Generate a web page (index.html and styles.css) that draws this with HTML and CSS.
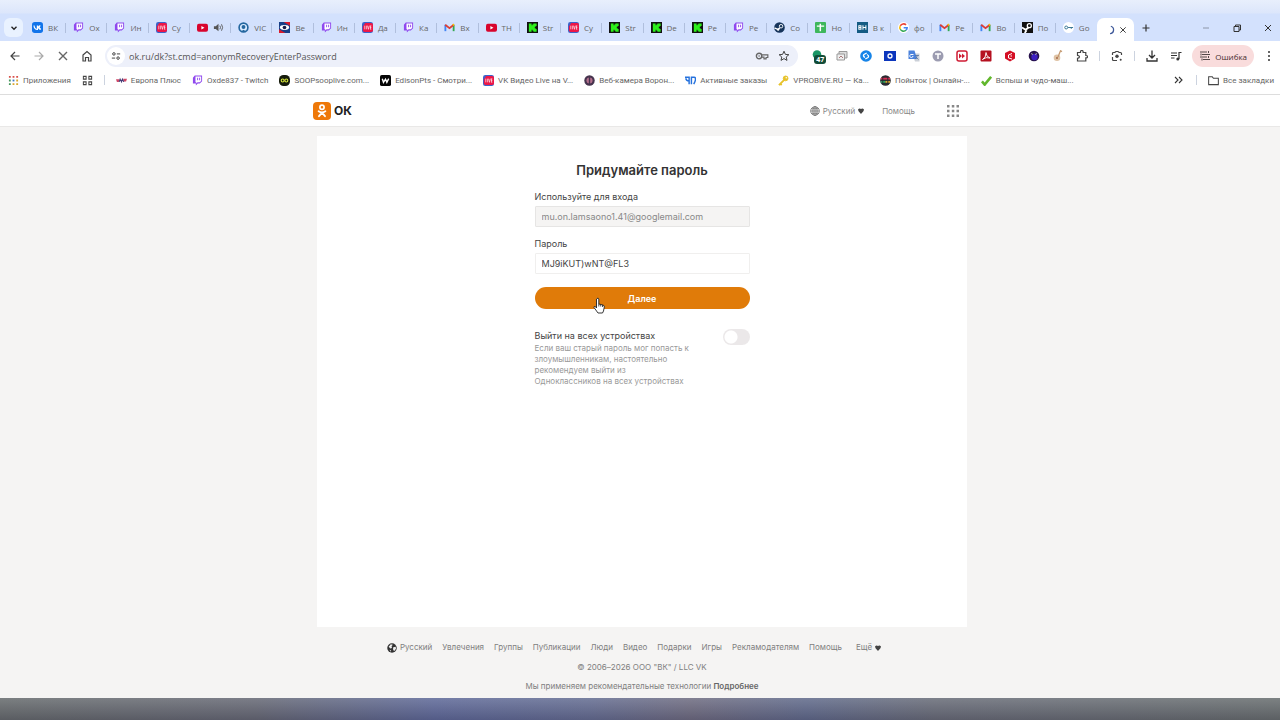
FILE: index.html
```
<!DOCTYPE html>
<html lang="ru">
<head>
    <meta charset="UTF-8">
    <meta name="viewport" content="width=device-width, initial-scale=1.0">
    <title>Придумайте пароль</title>
    <link rel="stylesheet" href="styles.css">
</head>
<body>
    <!-- shared icons -->
    <svg class="sprite" aria-hidden="true">
        <symbol id="vk" viewBox="0 0 12 12"><rect width="12" height="12" rx="3" fill="#1274ea"/><path d="M2.2 3.8c.2 2.6 1.5 4.2 3.7 4.3V3.8M5.9 5.9c1.5-.2 2-1 2.4-2.1M5.9 5.9c1.6 0 2.2 1 2.6 2.3M9 3.800L7.500 5.900 9.600 8.200" fill="none" stroke="#fff" stroke-width="1.300"/></symbol>
        <symbol id="twitch" viewBox="0 0 12 12"><path d="M3 .5h8v6.300L8.500 9.300H6.300L4.200 11.500V9.300H1V3z" fill="#8f48ee"/><path d="M3.800 1.500H10v5L8.300 8H6L4.700 9.200V8H3.800z" fill="#fff"/><path d="M6.100 3v2.700M8.300 3v2.700" stroke="#8f48ee" stroke-width="1"/></symbol>
        <symbol id="live" viewBox="0 0 12 12"><rect width="12" height="12" rx="2.500" fill="#3d62c9"/><path d="M3.500 1H10a2 2 0 0 1 2 2v6a2 2 0 0 1-2 2H3a2 2 0 0 1-2-2V5z" fill="#ec1747"/><path d="M3 4v4M4.800 4v4M6 4l1 4 1-4M9.200 4v4M9 4.300h1.200M9 6h1.200M9 7.800h1.200" fill="none" stroke="#fff" stroke-width=".7"/></symbol>
        <symbol id="youtube" viewBox="0 0 12 12"><rect y="2" width="12" height="8.500" rx="2" fill="#d8042d"/><path d="M4.800 4.300v4l3.300-2z" fill="#fff"/></symbol>
        <symbol id="kick" viewBox="0 0 12 12"><rect width="12" height="12" fill="#111"/><path d="M2 1.500h3v2h1v-1h1v-1h3.500v2.800h-1v1h-1v1.400h1v1h1v2.800H7v-1H6v-1H5v2H2z" fill="#2df01b"/></symbol>
        <symbol id="gmail" viewBox="0 0 12 12"><path d="M1.500 10V3" stroke="#4285f4" stroke-width="2"/><path d="M10.500 10V3" stroke="#34a853" stroke-width="2"/><path d="M1.300 3L6 6.700 10.700 3" fill="none" stroke="#dc3d35" stroke-width="2"/><path d="M9.600 3.500l1.300-1" stroke="#fbbc04" stroke-width="2"/></symbol>
        <symbol id="steam" viewBox="0 0 12 12"><circle cx="6" cy="6" r="5.800" fill="#17355c"/><circle cx="7.700" cy="4.600" r="1.900" fill="none" stroke="#fff" stroke-width="1"/><path d="M.5 6.500l4 1.700 1.800-2" fill="none" stroke="#fff" stroke-width="1.500"/><circle cx="4.500" cy="8.300" r="1.300" fill="#fff"/></symbol>
        <symbol id="steam-sq" viewBox="0 0 12 12"><path d="M0 0h12v12H0z" fill="#111"/><circle cx="8" cy="4" r="2.200" fill="none" stroke="#fff" stroke-width="1.400"/><path d="M0 6l4 2.500L7 6M3 12l2-3" fill="none" stroke="#fff" stroke-width="2"/></symbol>
        <symbol id="camera" viewBox="0 0 12 12"><circle cx="6" cy="6" r="4.800" fill="#dcecff" stroke="#24679f" stroke-width="1.800"/><circle cx="6" cy="5.500" r="2.100" fill="#24679f"/><path d="M3 10.500l3-2 3 2" fill="#24679f"/></symbol>
        <symbol id="flag" viewBox="0 0 12 12"><path d="M0 0h12v12H0z" fill="#183f88"/><path d="M5 0h7v4zM0 12V8l7 4z" fill="#da1b2c"/><ellipse cx="6" cy="6" rx="5" ry="2.600" fill="#fff"/><circle cx="6" cy="6" r="2" fill="#171b4b"/></symbol>
        <symbol id="sheet" viewBox="0 0 12 12"><rect width="12" height="12" rx="1" fill="#3eb75c"/><path d="M2 4.500h8M5.800 2v8" stroke="#fff" stroke-width="1.600"/></symbol>
        <symbol id="bh" viewBox="0 0 12 12"><path d="M0 0h12v12H0z" fill="#145b83"/><path d="M2 4v4h2.300V4zM2 6h2.300M6.500 3.500v5M9.700 3.500v5M6.500 6h3" fill="none" stroke="#fff" stroke-width="1.100"/></symbol>
        <symbol id="google" viewBox="0 0 12 12"><circle cx="6" cy="6" r="6" fill="#fff"/><path d="M8.800 3.200A4 4 0 0 0 2.500 4.200" fill="none" stroke="#ea4335" stroke-width="1.700"/><path d="M2.500 4.200a4 4 0 0 0 0 3.700" fill="none" stroke="#fbbc05" stroke-width="1.700"/><path d="M2.500 7.900A4 4 0 0 0 8.700 9" fill="none" stroke="#34a853" stroke-width="1.700"/><path d="M8.700 9a4 4 0 0 0 1.300-2.800H6.200" fill="none" stroke="#4285f4" stroke-width="1.700"/></symbol>
        <symbol id="key" viewBox="0 0 12 12"><circle cx="3.500" cy="6" r="2.300" fill="none" stroke="currentColor" stroke-width="1.200"/><circle cx="3.500" cy="6" r=".7" fill="currentColor"/><path d="M5.800 5H11v2.300H9.500V8.500H7.700V7H5.800" fill="none" stroke="currentColor"/></symbol>
        <symbol id="apps" viewBox="0 0 12 12"><g fill="currentColor"><path d="M0 0h2.500v2.500H0zM4.800 0h2.500v2.500H4.800zM9.500 0H12v2.500H9.500zM0 4.800h2.500v2.500H0zM4.800 4.800h2.500v2.500H4.800zM9.500 4.800H12v2.500H9.500zM0 9.500h2.500V12H0zM4.800 9.500h2.500V12H4.800zM9.500 9.500H12V12H9.500z"/></g></symbol>
        <symbol id="close" viewBox="0 0 12 12"><path d="M2 2l8 8M10 2l-8 8" fill="none" stroke="currentColor" stroke-width="1.400"/></symbol>
        <symbol id="arrow" viewBox="0 0 6 6"><path d="M0 1.500Q1.500 0 3 1q1.500-1 3 .5Q6 3 3 6 0 3 0 1.500z" fill="currentColor"/></symbol>
    </svg>

    <div class="browser">
        <div class="tab-bar">
            <button class="tab-search" aria-label="Поиск вкладок"><svg viewBox="0 0 12 12"><path d="M3 4.500l3 3 3-3" fill="none" stroke="#222" stroke-width="1.600"/></svg></button>
            <div class="tabs">
                <button class="tab"><svg><use href="#vk"/></svg><span>ВК</span></button>
                <button class="tab"><svg><use href="#twitch"/></svg><span>Ох</span></button>
                <button class="tab"><svg><use href="#twitch"/></svg><span>Ин</span></button>
                <button class="tab"><svg><use href="#live"/></svg><span>Су</span></button>
                <button class="tab"><svg><use href="#youtube"/></svg><svg viewBox="0 0 12 12" class="sound"><path d="M1 4.500h2L6 2v8L3 7.500H1z" fill="#555"/><path d="M7.500 4q1.300 2 0 4M9.300 2.500q2.300 3.500 0 7" fill="none" stroke="#555"/></svg></button>
                <button class="tab"><svg><use href="#camera"/></svg><span>VIC</span></button>
                <button class="tab"><svg><use href="#flag"/></svg><span>Ве</span></button>
                <button class="tab"><svg><use href="#twitch"/></svg><span>Ин</span></button>
                <button class="tab"><svg><use href="#live"/></svg><span>Да</span></button>
                <button class="tab"><svg><use href="#twitch"/></svg><span>Ка</span></button>
                <button class="tab"><svg><use href="#gmail"/></svg><span>Вх</span></button>
                <button class="tab"><svg><use href="#youtube"/></svg><span>ТН</span></button>
                <button class="tab"><svg><use href="#kick"/></svg><span>Str</span></button>
                <button class="tab"><svg><use href="#live"/></svg><span>Су</span></button>
                <button class="tab"><svg><use href="#kick"/></svg><span>Str</span></button>
                <button class="tab"><svg><use href="#kick"/></svg><span>De</span></button>
                <button class="tab"><svg><use href="#kick"/></svg><span>Ре</span></button>
                <button class="tab"><svg><use href="#twitch"/></svg><span>Ре</span></button>
                <button class="tab"><svg><use href="#steam"/></svg><span>Со</span></button>
                <button class="tab"><svg><use href="#sheet"/></svg><span>Но</span></button>
                <button class="tab"><svg><use href="#bh"/></svg><span>В к</span></button>
                <button class="tab"><svg><use href="#google"/></svg><span>фо</span></button>
                <button class="tab"><svg><use href="#gmail"/></svg><span>Ре</span></button>
                <button class="tab"><svg><use href="#gmail"/></svg><span>Во</span></button>
                <button class="tab"><svg><use href="#steam-sq"/></svg><span>По</span></button>
                <button class="tab"><svg viewBox="0 0 12 12"><circle cx="6" cy="6" r="6" fill="#fff"/><circle cx="3.500" cy="6" r="1.600" fill="none" stroke="#2d6e8d" stroke-width="1"/><path d="M5.500 6H11M9 6v1.500" stroke="#2d6e8d"/></svg><span>Go</span></button>
            </div>
            <div class="tab-active">
                <svg viewBox="0 0 12 12"><path d="M7 1.500A4.600 4.600 0 0 1 6 10.500" fill="none" stroke="#3e5899" stroke-width="1.500"/></svg>
                <button class="icon-btn tiny" aria-label="Закрыть вкладку"><svg><use href="#close"/></svg></button>
            </div>
            <button class="icon-btn new-tab" aria-label="Новая вкладка"><svg viewBox="0 0 12 12"><path d="M6 2.500v7M2.500 6h7" stroke="#333" stroke-width="1.200"/></svg></button>
            <div class="window-controls">
                <button class="icon-btn" aria-label="Свернуть"><svg viewBox="0 0 12 12"><path d="M3 6h6" stroke="#8d96a8"/></svg></button>
                <button class="icon-btn" aria-label="Развернуть"><svg viewBox="0 0 12 12"><path d="M3 4.500h5v5H3zM4.500 4.500V3h5v5H8" fill="none" stroke="#333"/></svg></button>
                <button class="icon-btn" aria-label="Закрыть"><svg viewBox="0 0 12 12"><path d="M3 3l6 6M9 3L3 9" stroke="#333"/></svg></button>
            </div>
        </div>

        <div class="toolbar">
            <div class="nav-buttons">
                <button class="icon-btn" aria-label="Назад"><svg viewBox="0 0 12 12"><path d="M10.500 6H2M6 2L2 6l4 4" fill="none" stroke="#444" stroke-width="1.200"/></svg></button>
                <button class="icon-btn" aria-label="Вперёд"><svg viewBox="0 0 12 12"><path d="M1.500 6H10M6 2l4 4-4 4" fill="none" stroke="#aaa" stroke-width="1.200"/></svg></button>
                <button class="icon-btn" aria-label="Остановить"><svg><use href="#close"/></svg></button>
                <button class="icon-btn" aria-label="Главная"><svg viewBox="0 0 12 12"><path d="M2 5l4-3.500L10 5v6H7.500V7.500h-3V11H2z" fill="none" stroke="#444" stroke-width="1.200"/></svg></button>
            </div>
            <div class="address">
                <button class="site-info" aria-label="Сведения о сайте"><svg viewBox="0 0 12 12"><path d="M7 3.500h4M1 8.500h4" stroke="#444" stroke-width="1.200"/><circle cx="3.500" cy="3.500" r="1.500" fill="none" stroke="#444" stroke-width="1.200"/><circle cx="8.500" cy="8.500" r="1.500" fill="none" stroke="#444" stroke-width="1.200"/></svg></button>
                <input type="text" class="url" aria-label="Адрес" value="ok.ru/dk?st.cmd=anonymRecoveryEnterPassword">
                <button class="icon-btn" aria-label="Пароли"><svg class="wide"><use href="#key"/></svg></button>
                <button class="icon-btn star" aria-label="В закладки"><svg viewBox="0 0 12 12"><path d="M6 1.200l1.400 3.200 3.500.3-2.700 2.300.8 3.400L6 8.600l-3 1.800.8-3.400L1.100 4.700l3.500-.3z" fill="none" stroke="#444"/></svg></button>
            </div>
            <div class="extensions">
                <button class="icon-btn badge-holder" aria-label="Расширение"><svg viewBox="0 0 12 12"><circle cx="5" cy="4.500" r="4.300" fill="#199565"/></svg><span class="badge">47</span></button>
                <button class="icon-btn" aria-label="Снимки"><svg viewBox="0 0 12 12"><path d="M3 1.500h8v6.500H3z" fill="#ddd" stroke="#999"/><path d="M1 4h7.500v6H1z" fill="#eee" stroke="#999"/><path d="M3 8l2-2 2 2" stroke="#a77" fill="none"/></svg></button>
                <button class="icon-btn" aria-label="Shazam"><svg viewBox="0 0 12 12"><circle cx="6" cy="6" r="5.800" fill="#1684e8"/><path d="M6.700 3L4 4.500q-1.500 1.500 1 3M5.300 9L8 7.500q1.500-1.500-1-3" fill="none" stroke="#fff" stroke-width="1.300"/></svg></button>
                <button class="icon-btn" aria-label="Запись"><svg viewBox="0 0 12 12"><path d="M0 1h12v10H0z" fill="#0c36bd"/><circle cx="6" cy="6" r="2" fill="none" stroke="#fff" stroke-width="1.300"/></svg></button>
                <button class="icon-btn" aria-label="Переводчик"><svg viewBox="0 0 12 12"><path d="M4 3.500h7.500v8H7z" fill="#cbd0d8"/><path d="M.5.500h6L9 9H.5z" fill="#4b82dc"/><path d="M5.500 4.500H2.700A1.600 1.600 0 1 0 5 6" fill="none" stroke="#fff"/><path d="M7 5.500h4M9 5v1q0 2-2 3M8 7l2.500 2.500" fill="none" stroke="#58739f" stroke-width=".8"/></svg></button>
                <button class="icon-btn" aria-label="T"><svg viewBox="0 0 12 12"><circle cx="6" cy="6" r="5.500" fill="#9c9cb1"/><path d="M3 4h6M6 4v5" stroke="#fff" stroke-width="1.500"/></svg></button>
                <button class="icon-btn" aria-label="Перемотка"><svg viewBox="0 0 12 12"><rect x="1" y="1" width="10" height="10" rx="2" fill="#fff" stroke="#cf1d35" stroke-width="1.500"/><path d="M3 3.500L6 6 3 8.500zM6 3.500L9 6 6 8.500z" fill="#cf1d35"/></svg></button>
                <button class="icon-btn" aria-label="PDF"><svg viewBox="0 0 12 12"><rect x=".5" y=".5" width="11" height="11" rx="1" fill="#b51120"/><path d="M2.500 9.500Q6 8 6 2.500q0 4 4 5.500Q6 6.500 2.500 9.500z" fill="none" stroke="#fff" stroke-width=".9"/></svg></button>
                <button class="icon-btn" aria-label="Блокировщик"><svg viewBox="0 0 12 12"><path d="M6 .5l5 2.500v5.500L6 11.500 1 8.500V3z" fill="#d50f25"/><path d="M8 3.500L4.500 5v3L8 9M8 6H6.500" fill="none" stroke="#fff"/></svg></button>
                <button class="icon-btn" aria-label="Расширение"><svg viewBox="0 0 12 12"><circle cx="6" cy="6" r="5.300" fill="#27124c"/><circle cx="6.500" cy="7" r="3.200" fill="#3d1fc0"/><path d="M3 3.500l2 1M7 4.500l2-1" stroke="#aaa"/></svg></button>
                <button class="icon-btn" aria-label="Музыка"><svg viewBox="0 0 12 12"><circle cx="5" cy="7.800" r="3.300" fill="#dfc3a5"/><path d="M6 7L8.500.800l1.500.800" fill="none" stroke="#c59a70" stroke-width="1.300"/><circle cx="5" cy="8" r="1" fill="#a66b4a"/></svg></button>
                <button class="icon-btn" aria-label="Расширения"><svg viewBox="0 0 12 12"><path d="M1.500 2.500h3V1.800a1.300 1.300 0 0 1 2.600 0v.7h2.700v3h.5a1.200 1.200 0 0 1 0 2.400h-.5V11H1.500V8.300q2-.2 2-1.500t-2-1.500z" fill="none" stroke="#444" stroke-width="1.200"/></svg></button>
            </div>
            <span class="divider"></span>
            <button class="icon-btn lens" aria-label="Объектив"><svg viewBox="0 0 12 12"><path d="M1.500 5V3.500q0-1 1-1h1.300L5 1.500h2l1.200 1h1.300q1 0 1 1V5M1.500 7v2.500q0 1 1 1H6" fill="none" stroke="#444" stroke-width="1.200"/><circle cx="6" cy="6.300" r="1.700" fill="#444"/><circle cx="9.700" cy="9.700" r="1" fill="#444"/></svg></button>
            <span class="divider"></span>
            <button class="icon-btn" aria-label="Загрузки"><svg viewBox="0 0 12 12"><path d="M6 .5v7M3 5l3 3 3-3M1 8v3h10V8" fill="none" stroke="#333" stroke-width="1.300"/></svg></button>
            <button class="icon-btn" aria-label="Медиа"><svg viewBox="0 0 12 12"><path d="M1 3h6M1 5.500h6M1 8h3.500M9 9V2.500h2.500" fill="none" stroke="#333" stroke-width="1.200"/><circle cx="7.800" cy="9" r="1.500" fill="#333"/></svg></button>
            <button class="error-btn"><svg viewBox="0 0 12 12"><path d="M1 2h7M3 4.500h8M1 7h7M4 9.500h7M9.500 1v2M2 3.500v2M9.500 6v2M3 8.500v2" stroke="#554848"/></svg>Ошибка</button>
            <button class="icon-btn menu" aria-label="Меню"><svg viewBox="0 0 12 12"><g fill="#333"><circle cx="6" cy="2" r="1"/><circle cx="6" cy="6" r="1"/><circle cx="6" cy="10" r="1"/></g></svg></button>
        </div>

        <div class="bookmarks">
            <a href="#" class="bookmark"><svg viewBox="0 0 12 12"><g fill="#d8504a"><path d="M1 1h2v2H1zM5 1h2v2H5zM9 1h2v2H9z"/></g><g fill="#47985c"><path d="M1 5h2v2H1zM1 9h2v2H1z"/></g><path d="M5 5h2v2H5z" fill="#3b78c9"/><path d="M9 5h2v2H9zM5 9h2v2H5zM9 9h2v2H9z" fill="#d7a62c"/></svg><span>Приложения</span></a>
            <a href="#" class="bookmark" aria-label="Группы вкладок"><svg viewBox="0 0 12 12"><path d="M1.500 1.500h3v3h-3zM7.500 1.500h3v3h-3zM1.500 7.500h3v3h-3zM7.500 7.500h3v3h-3z" fill="none" stroke="#444" stroke-width="1.100"/></svg></a>
            <span class="divider"></span>
            <a href="#" class="bookmark"><svg viewBox="0 0 12 12"><path d="M0 4.500h4l-1 3H1zM8 4h4l-1 3H8z" fill="#d04868"/><path d="M3.500 7.500l1-3 1.500 3 1-3 1.500 3" fill="none" stroke="#443c76" stroke-width="1.200"/></svg><span>Европа Плюс</span></a>
            <a href="#" class="bookmark"><svg><use href="#twitch"/></svg><span>Oxde837 - Twitch</span></a>
            <a href="#" class="bookmark"><svg viewBox="0 0 12 12"><rect width="12" height="12" rx="5" fill="#151b0b"/><circle cx="4" cy="6" r="1.600" fill="none" stroke="#d9e83c" stroke-width="1.200"/><circle cx="8" cy="6" r="1.600" fill="none" stroke="#d9e83c" stroke-width="1.200"/></svg><span>SOOPsooplive.com...</span></a>
            <a href="#" class="bookmark"><svg viewBox="0 0 12 12"><rect width="12" height="12" rx="2" fill="#050505"/><path d="M2.500 4l1.300 4L6 4.500 7.500 8l2-4" fill="none" stroke="#fff" stroke-width="1.500"/></svg><span>EdisonPts - Смотри...</span></a>
            <a href="#" class="bookmark"><svg><use href="#live"/></svg><span>VK Видео Live на V...</span></a>
            <a href="#" class="bookmark"><svg viewBox="0 0 12 12"><circle cx="6" cy="6" r="5.700" fill="#46344e"/><circle cx="6" cy="6" r="3.300" fill="#b5708e"/><path d="M6 2v8" stroke="#46344e" stroke-width="1.500"/></svg><span>Веб-камера Ворон...</span></a>
            <a href="#" class="bookmark"><svg viewBox="0 0 12 12"><path d="M0 2.500h4.500V10M1 3.500q0 3 3.500 3M7 10V2.500h3q1.500 0 1.500 2T9.500 10" fill="none" stroke="#2672dd" stroke-width="1.600"/></svg><span>Активные заказы</span></a>
            <a href="#" class="bookmark"><svg viewBox="0 0 12 12"><circle cx="8.300" cy="3.700" r="2.600" fill="#e7c229" stroke="#e7c229" stroke-width="1"/><circle cx="9" cy="3" r=".8" fill="#fff"/><path d="M6.500 5.500L1 11M2.500 9.500l1.500 1.500" stroke="#e7c229" stroke-width="2"/></svg><span>VPROBIVE.RU — Ка...</span></a>
            <a href="#" class="bookmark"><svg viewBox="0 0 12 12"><circle cx="6" cy="6" r="5.800" fill="#292b32"/><path d="M1 4h10" stroke="#d92f55" stroke-width="2"/><path d="M1 7.500h5" stroke="#2ea461" stroke-width="2"/><path d="M6 7.500h5" stroke="#d5a72c" stroke-width="2"/><path d="M3 1.500v9M8.500 1.500v9" stroke="#292b32"/></svg><span>Пойнток | Онлайн-...</span></a>
            <a href="#" class="bookmark"><svg viewBox="0 0 12 12"><path d="M1 7l3 3.500L11 2" fill="none" stroke="#61b72c" stroke-width="2.800"/></svg><span>Вспыш и чудо-маш...</span></a>
            <button class="icon-btn more" aria-label="Ещё закладки"><svg viewBox="0 0 12 12"><path d="M2 3l3 3-3 3M6 3l3 3-3 3" fill="none" stroke="#333" stroke-width="1.100"/></svg></button>
            <span class="divider"></span>
            <a href="#" class="bookmark all"><svg viewBox="0 0 12 12"><path d="M.7 2h4l1.200 1.500h5.400V10.500H.7z" fill="none" stroke="#444" stroke-width="1.100"/></svg><span>Все закладки</span></a>
        </div>
    </div>

    <header class="header">
        <div class="header-inner">
            <a href="#" class="logo">
                <svg viewBox="0 0 18 18"><rect width="18" height="18" rx="4" fill="#ee7808"/><circle cx="9" cy="5.300" r="2.100" fill="none" stroke="#fff" stroke-width="1.700"/><path d="M5.600 9.200Q9 11.400 12.400 9.200M9 10.700L6 14.200M9 10.700l3 3.500" fill="none" stroke="#fff" stroke-width="1.800" stroke-linecap="round"/></svg>
                <span>ОК</span>
            </a>
            <nav class="header-nav">
                <a href="#" class="lang"><svg viewBox="0 0 12 12"><path d="M1 6h10M1.700 3.300h8.600M1.700 8.700h8.600M6 .8v10.400" stroke="#666" stroke-width=".9"/><circle cx="6" cy="6" r="5.200" fill="none" stroke="#666" stroke-width=".9"/><ellipse cx="6" cy="6" rx="2.500" ry="5.200" fill="none" stroke="#666" stroke-width=".9"/></svg>Русский<svg class="arrow"><use href="#arrow"/></svg></a>
                <a href="#">Помощь</a>
                <button class="icon-btn services" aria-label="Сервисы"><svg><use href="#apps"/></svg></button>
            </nav>
        </div>
    </header>

    <div class="page">
        <main class="content">
            <form class="recovery">
                <h1>Придумайте пароль</h1>
                <label for="login">Используйте для входа</label>
                <input type="text" id="login" value="mu.on.lamsaono1.41@googlemail.com" disabled>
                <label for="password">Пароль</label>
                <input type="text" id="password" value="MJ9iKUT)wNT@FL3">
                <div class="submit-row">
                    <button type="button" class="submit">Далее</button>
                    <!-- pointer over the button -->
                    <svg class="cursor" viewBox="0 0 12 17"><path d="M4 1.500q1.300-1 1.800.500V7l4.200 1q1.500.500 1.300 2l-.8 4-1 2H5L1 10.500q-.2-1.500 1.300-1L3.500 11V2z" fill="#fff" stroke="#222" stroke-width=".9"/><path d="M5.800 7v2.500M7.700 7.500v2M9.500 8v2" stroke="#222" stroke-width=".8"/></svg>
                </div>
                <div class="logout">
                    <div class="logout-text">
                        <label for="logout-all">Выйти на всех устройствах</label>
                        <p>Если ваш старый пароль мог попасть к злоумышленникам, настоятельно рекомендуем выйти из Одноклассников на всех устройствах</p>
                    </div>
                    <input type="checkbox" id="logout-all" class="switch">
                </div>
            </form>
        </main>

        <footer class="footer">
            <nav class="footer-nav">
                <a href="#" class="lang"><svg viewBox="0 0 12 12"><circle cx="6" cy="6" r="5.700" fill="#333"/><path d="M2 4.500L4.500 1.500 7 2 5.500 4l.5 2-2 .5zM7.500 5l3-.5.3 2.500-2.300 3-1.300-2.500zM3 8l2 1-.5 1.500z" fill="#eee"/></svg>Русский</a>
                <a href="#">Увлечения</a>
                <a href="#">Группы</a>
                <a href="#">Публикации</a>
                <a href="#">Люди</a>
                <a href="#">Видео</a>
                <a href="#">Подарки</a>
                <a href="#">Игры</a>
                <a href="#">Рекламодателям</a>
                <a href="#">Помощь</a>
                <a href="#" class="lang footer-more">Ещё<svg class="arrow"><use href="#arrow"/></svg></a>
            </nav>
            <p>© 2006–2026 ООО "ВК" / LLC VK</p>
            <p>Мы применяем рекомендательные технологии <a href="#" class="details">Подробнее</a></p>
        </footer>
    </div>
    <div class="desktop-strip"></div>
</body>
</html>
```
FILE: styles.css
```
* {
    box-sizing: border-box;
}
body {
    margin: 0;
    min-height: 100vh;
    display: flex;
    flex-direction: column;
    background-color: #f5f4f3;
    font-family: Inter, "Open Sans", sans-serif;
    font-size: 9px;
    color: #444;
}
a {
    color: inherit;
    text-decoration: none;
}
button, input {
    font-family: inherit;
    font-size: inherit;
    color: inherit;
}
button {
    padding: 0;
    border: 0;
    background: none;
}
svg {
    display: block;
    flex: none;
    width: 12px;
    height: 12px;
}
p {
    margin: 0;
}
.sprite {
    position: absolute;
    width: 0;
    height: 0;
}
.icon-btn {
    flex: none;
    width: 24px;
    height: 22px;
    display: flex;
    align-items: center;
    justify-content: center;
}

/* browser window */
.browser {
    background-color: #fff;
    border-bottom: 1px solid #ddd;
    font-family: "Open Sans", sans-serif;
    font-size: 8px;
    color: #666;
}
.tab-bar {
    display: flex;
    height: 41px;
    padding-top: 14px;
    background: linear-gradient(#e8effc, #dce6fb 13px, #d3e1fd 14px);
}
.tab-search {
    width: 19px;
    height: 19px;
    margin: 4px 2px 0 4px;
    display: flex;
    align-items: center;
    justify-content: center;
    border-radius: 6px;
    background-color: #e9f2ff;
}
.tab-search svg {
    width: 10px;
    height: 10px;
}
.tabs {
    flex: 1;
    min-width: 0;
    display: flex;
}
.tab {
    flex: 1;
    min-width: 0;
    height: 27px;
    padding-left: 7px;
    display: flex;
    align-items: center;
    gap: 5px;
    background: linear-gradient(#b0bfdd, #b0bfdd) right center / 1px 10px no-repeat;
    white-space: nowrap;
}
.tab:last-child {
    background: none;
}
.tab svg {
    width: 11px;
    height: 11px;
}
.tab-active {
    width: 37px;
    margin-top: 4px;
    padding-left: 8px;
    display: flex;
    align-items: center;
    border-radius: 7px 7px 0 0;
    background-color: #fff;
    color: #333;
}
.tab-active svg {
    width: 10px;
    height: 10px;
}
.tiny {
    width: 16px;
}
.tab-active .tiny svg {
    width: 8px;
    height: 8px;
}
.new-tab {
    height: 27px;
}
.window-controls {
    display: flex;
    gap: 7px;
    margin-left: 36px;
}
.window-controls .icon-btn {
    height: 27px;
}
.toolbar {
    height: 30px;
    display: flex;
    align-items: center;
}
.nav-buttons {
    display: flex;
    padding-left: 3px;
    margin-right: 6px;
}
.address {
    flex: 1;
    min-width: 0;
    height: 22px;
    padding: 0 4px 0 2px;
    display: flex;
    align-items: center;
    border-radius: 11px;
    background-color: #edf0fa;
}
.site-info {
    flex: none;
    width: 18px;
    height: 18px;
    display: flex;
    align-items: center;
    justify-content: center;
    border-radius: 50%;
    background-color: #fff;
}
.site-info svg {
    width: 10px;
    height: 10px;
}
.url {
    flex: 1;
    min-width: 0;
    padding: 0 4px;
    border: 0;
    outline: none;
    background: none;
    font-size: 9px;
    color: #555;
}
.wide {
    width: 14px;
    height: 14px;
}
.star {
    width: 20px;
}
.extensions {
    display: flex;
    margin-left: 8px;
}
.badge-holder {
    position: relative;
}
.badge {
    position: absolute;
    left: 8px;
    top: 10px;
    padding: 0 2px;
    border-radius: 3px;
    background-color: #124c38;
    color: #fff;
    font-size: 7px;
    font-weight: bold;
    line-height: 9px;
}
.divider {
    flex: none;
    width: 1px;
    height: 10px;
    background-color: #ccd3df;
}
.toolbar .divider {
    margin: 0 5px;
}
.error-btn {
    height: 22px;
    margin-left: 4px;
    padding: 0 7px;
    display: flex;
    align-items: center;
    gap: 4px;
    border-radius: 11px;
    background-color: #f9dcdc;
    color: #452e2e;
}
.menu {
    width: 22px;
    margin-left: 4px;
}
.bookmarks {
    height: 23px;
    padding: 0 6px 5px 8px;
    display: flex;
    align-items: center;
    gap: 11px;
    font-family: Roboto, "Open Sans", sans-serif;
    white-space: nowrap;
}
.bookmark {
    display: flex;
    align-items: center;
    gap: 4px;
}
.bookmark svg {
    width: 11px;
    height: 11px;
}
.more {
    width: 12px;
    margin-left: auto;
}

/* site header */
.header {
    background-color: #fff;
    border-bottom: 1px solid #e9e8e7;
}
.header-inner, .page {
    width: 654px;
    max-width: 100%;
    margin: 0 auto;
}
.header-inner {
    height: 31px;
    display: flex;
    align-items: center;
    justify-content: space-between;
}
.logo {
    display: flex;
    align-items: center;
    gap: 3px;
    font-size: 12px;
    font-weight: 700;
    color: #222;
}
.logo svg {
    width: 18px;
    height: 18px;
}
.header-nav {
    display: flex;
    align-items: center;
    gap: 18px;
    padding-right: 2px;
    color: #888;
    font-size: 8px;
}
.lang {
    display: flex;
    align-items: center;
    gap: 3px;
}
.lang svg {
    width: 10px;
    height: 10px;
}
.lang .arrow {
    width: 6px;
    height: 6px;
    color: #444;
}
.services {
    margin-left: 8px;
    color: #888;
}

/* password form */
.page {
    flex: 1;
    display: flex;
    flex-direction: column;
    padding: 9px 0 0 4px;
}
.content {
    flex: 1;
    background-color: #fff;
}
.recovery {
    width: 215px;
    margin: 0 auto;
    padding-top: 25px;
}
h1 {
    margin: 0 0 11px;
    font-size: 13px;
    font-weight: 600;
    line-height: 18px;
    text-align: center;
    white-space: nowrap;
    color: #333;
}
.recovery label {
    display: block;
    line-height: 14px;
}
.recovery input[type="text"] {
    display: block;
    width: 100%;
    height: 21px;
    margin: 2px 0 10px;
    padding: 0 6px;
    border: 1px solid #f0efee;
    border-radius: 1px;
    outline: none;
    background-color: #fff;
}
.recovery input:disabled {
    background-color: #f5f4f3;
    border-color: #e6e5e4;
    color: #888;
}
.submit-row {
    position: relative;
    margin-top: 13px;
}
.submit {
    display: block;
    width: 100%;
    height: 22px;
    border-radius: 11px;
    background-color: #e07b09;
    color: #fff;
    font-weight: 600;
}
.cursor {
    position: absolute;
    left: 58px;
    top: 10px;
    width: 12px;
    height: 17px;
}
.logout {
    display: flex;
    justify-content: space-between;
    margin-top: 20px;
}
.logout-text {
    width: 156px;
}
.logout p {
    font-size: 8px;
    line-height: 11px;
    color: #999;
}
.switch {
    appearance: none;
    width: 27px;
    height: 16px;
    margin: 0;
    border-radius: 8px;
    background: radial-gradient(circle at 8px 8px, #fff 6px, #ebe8e9 7px);
}

/* footer */
.footer {
    padding: 14px 0 5px;
    text-align: center;
    font-size: 8px;
    line-height: 13px;
    color: #808080;
}
.footer-nav {
    display: flex;
    justify-content: center;
    gap: 10px;
    padding: 0 16px 1px 0;
}
.footer p {
    margin-top: 6px;
}
.footer-more {
    margin-left: 4px;
}
.details {
    font-weight: 600;
    color: #666;
}
.desktop-strip {
    height: 22px;
    background:
        linear-gradient(rgba(255, 255, 255, .15), rgba(30, 20, 40, .15)),
        linear-gradient(90deg, #64696b, #646773 20%, #5c6797 34%, #626b90 46%, #6c6a7f 54%, #5e6889 63%, #666a76 73%, #666c6d);
}
```
